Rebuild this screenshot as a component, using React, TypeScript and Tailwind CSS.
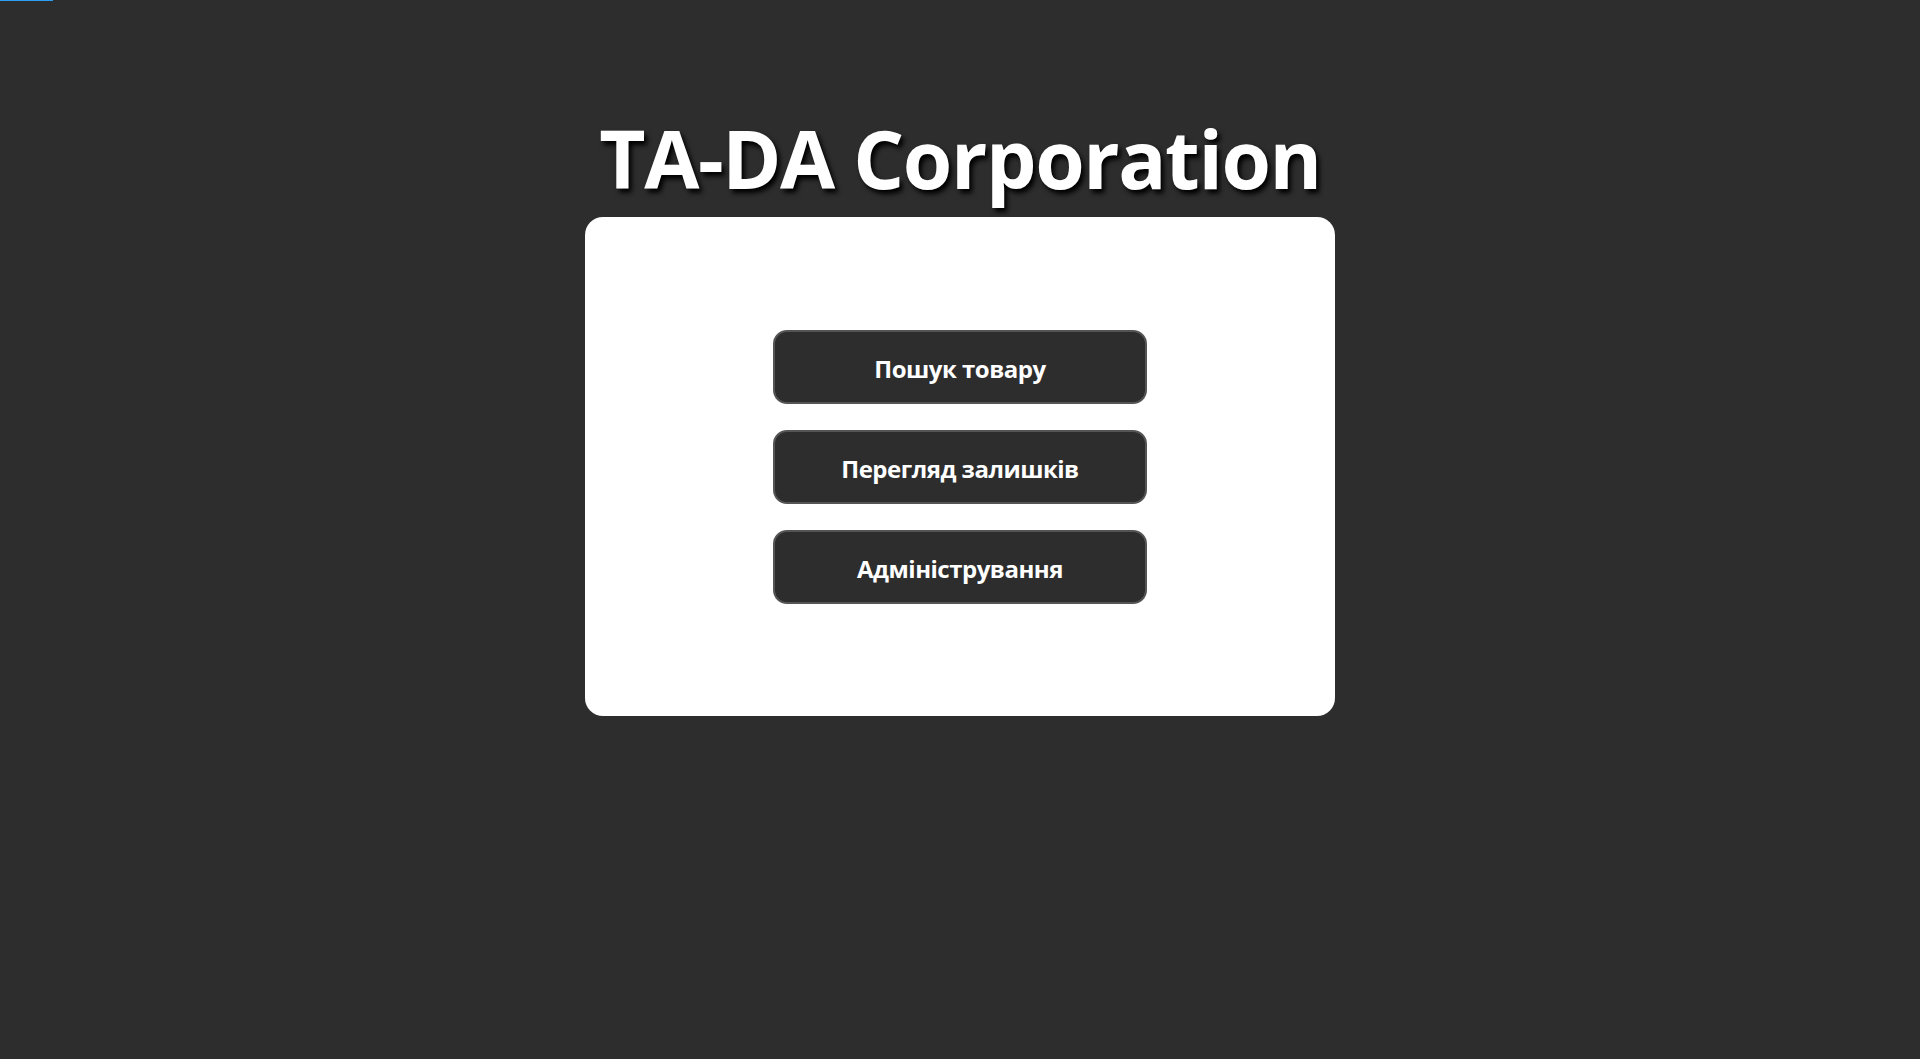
export default function App() {
  const items = ["Пошук товару", "Перегляд залишків", "Адміністрування"];
  return (
    <div
      className="relative min-h-[1059px] w-full bg-[#2d2d2d] flex flex-col items-center"
      style={{ fontFamily: '"Open Sans", "Noto Sans", sans-serif' }}
    >
      <div className="absolute left-0 top-0 h-[1px] w-[53px] bg-[#2a9df4]" />
      <h1 className="mt-[108px] text-[80px] leading-[100px] font-bold text-white tracking-[-1.4px] [text-shadow:3px_4px_5px_#000]">
        TA-DA Corporation
      </h1>
      <div className="mt-[9px] w-[750px] h-[499px] bg-white rounded-[18px] flex flex-col items-center justify-center gap-[26px]">
        {items.map((t) => (
          <button
            key={t}
            className="w-[374px] h-[74px] pt-[4px] rounded-[14px] bg-[#2d2d2d] border-2 border-[#555] text-white font-bold text-[24px] tracking-[-0.5px]"
          >
            {t}
          </button>
        ))}
      </div>
    </div>
  );
}
